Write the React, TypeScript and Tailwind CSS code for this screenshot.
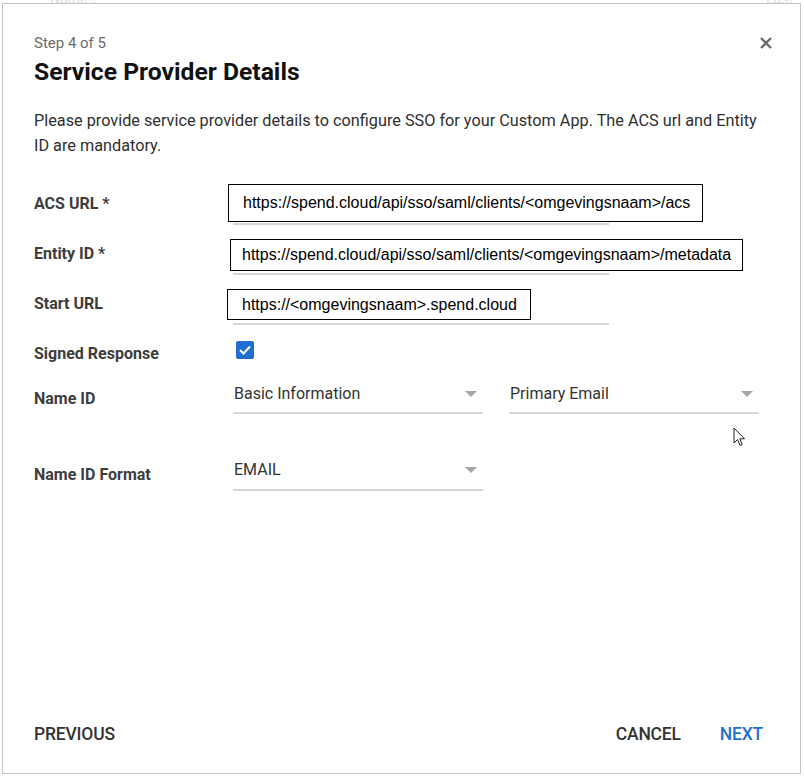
import React from 'react';

const FIELDS = [
  {
    label: 'ACS URL *',
    value: 'https://spend.cloud/api/sso/saml/clients/<omgevingsnaam>/acs',
    box: 'top-[9px] left-[-5px] h-[38px] pl-[14px] pr-[12px]',
  },
  {
    label: 'Entity ID *',
    value: 'https://spend.cloud/api/sso/saml/clients/<omgevingsnaam>/metadata',
    box: 'top-[14px] left-[-3px] h-[32px] pl-[11px] pr-[11px]',
  },
  {
    label: 'Start URL',
    value: 'https://<omgevingsnaam>.spend.cloud',
    box: 'top-[14px] left-[-6px] h-[31px] pl-[14px] pr-[13px]',
  },
];

function Caret() {
  return (
    <svg width="12" height="6" viewBox="0 0 12 6" className="shrink-0">
      <path d="M0 0 L12 0 L6 6 Z" fill="#a6a6a6" />
    </svg>
  );
}

function Select({ value }: { value: string }) {
  return (
    <div className="flex h-full w-[250px] items-start justify-between border-b-2 border-[#d6d6d6] pl-px pt-[14px] pr-[6px]">
      <span className="text-[16px] leading-[20px] text-[#333]">{value}</span>
      <span className="mt-[7px]">
        <Caret />
      </span>
    </div>
  );
}

function Label({ children }: { children: React.ReactNode }) {
  return (
    <div className="w-[199px] shrink-0 pt-[19px] text-[16px] font-bold leading-[20px] text-[#3d3d3d]">
      {children}
    </div>
  );
}

export default function App() {
  return (
    <div className="relative h-[776px] w-[805px] overflow-hidden bg-white font-['Roboto',sans-serif]">
      {/* page behind the dialog */}
      <div className="absolute left-[50px] top-[-11px] text-[14px] text-[#dcdcdc]">Name ↓</div>
      <div className="absolute left-[766px] top-[-11px] text-[14px] text-[#dcdcdc]">Last</div>

      <div className="relative ml-[2px] mt-[3px] flex h-[771px] w-[799px] flex-col border border-[#c4c4c4] bg-white pl-[31px]">
        <div className="flex items-start justify-between pr-[28px] pt-[29px]">
          <div>
            <div className="text-[15px] leading-[20px] text-[#6b6b6b]">Step 4 of 5</div>
            <h2 className="mt-[5px] text-[24.7px] font-bold leading-[28px] text-[#111]">
              Service Provider Details
            </h2>
          </div>
          <button className="mt-[4px] text-[#666]" aria-label="Close">
            <svg width="12" height="12" viewBox="0 0 12 12">
              <path d="M1 1 L11 11 M11 1 L1 11" stroke="#6a6a6a" strokeWidth="2.4" />
            </svg>
          </button>
        </div>

        <p className="mt-[22px] text-[16.25px] leading-[25px] text-[#2f2f2f]">
          Please provide service provider details to configure SSO for your Custom App. The ACS url and Entity
          <br />
          ID are mandatory.
        </p>

        <div className="mt-[17px] flex flex-col">
          {FIELDS.map((f) => (
            <div key={f.label} className="flex h-[50px]">
              <Label>{f.label}</Label>
              <div className="relative h-full w-[376px] border-b-2 border-[#d6d6d6]">
                <div
                  className={`absolute flex items-center whitespace-nowrap border-[1.5px] border-black bg-white font-['Liberation_Sans',Arial,sans-serif] text-[16px] text-black ${f.box}`}
                >
                  {f.value}
                </div>
              </div>
            </div>
          ))}

          <div className="flex h-[45px]">
            <Label>Signed Response</Label>
            <div className="ml-[3px] mt-[16px] flex h-[18px] w-[18px] items-center justify-center rounded-[2px] bg-[#1f6fd0]">
              <svg width="12" height="10" viewBox="0 0 12 10">
                <path d="M1 5 L4.5 8.5 L11 1.5" stroke="white" strokeWidth="2" fill="none" />
              </svg>
            </div>
          </div>

          <div className="flex h-[44px]">
            <Label>Name ID</Label>
            <div className="flex gap-[26px]">
              <Select value="Basic Information" />
              <Select value="Primary Email" />
            </div>
          </div>

          <div className="mt-[32px] flex h-[45px]">
            <Label>Name ID Format</Label>
            <Select value="EMAIL" />
          </div>
        </div>

        <div className="mt-auto mb-[19px] flex h-[40px] items-center justify-between pr-[37px] text-[17.5px] font-medium tracking-[-0.2px]">
          <button className="uppercase text-[#333]">Previous</button>
          <div className="flex gap-[39px]">
            <button className="uppercase text-[#333]">Cancel</button>
            <button className="uppercase text-[#1f6fd0]">Next</button>
          </div>
        </div>

        {/* mouse pointer */}
        <svg className="absolute left-[730px] top-[423px]" width="13" height="20" viewBox="0 0 13 20">
          <path
            d="M1 1 L1 16 L4.5 12.5 L7 18.5 L9.2 17.5 L6.8 11.8 L11.5 11.8 Z"
            fill="white"
            stroke="#222"
            strokeWidth="1"
            strokeLinejoin="round"
          />
        </svg>
      </div>
    </div>
  );
}
